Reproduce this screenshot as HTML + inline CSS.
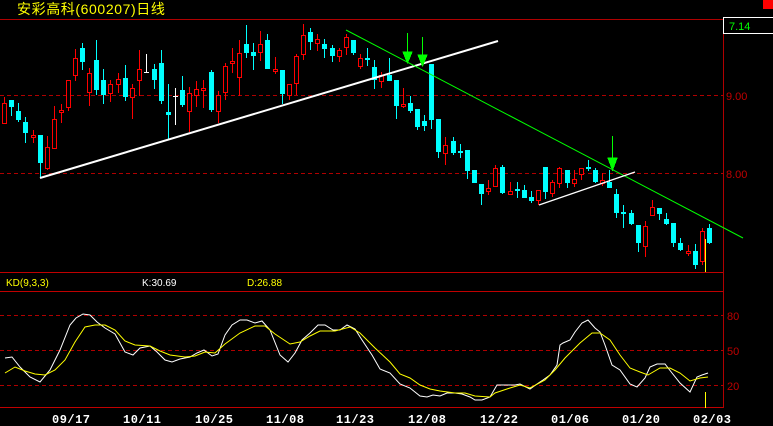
<!DOCTYPE html>
<html><head><meta charset="utf-8"><style>
html,body{margin:0;padding:0;background:#000;width:773px;height:426px;overflow:hidden}
svg{display:block}
text{font-family:"Liberation Sans","Noto Sans CJK SC",sans-serif}
</style></head><body>
<svg id="s" width="773" height="426" xmlns="http://www.w3.org/2000/svg" shape-rendering="crispEdges">
<rect width="773" height="426" fill="#000"/>
<text x="17" y="14" fill="#ffff00" font-size="14" letter-spacing="0.6">安彩高科(600207)日线</text>
<rect x="763" y="0" width="10" height="9" fill="#ff0000"/>
<line x1="0" y1="19.5" x2="773" y2="19.5" stroke="#b00000"/>
<line x1="723.5" y1="19" x2="723.5" y2="408" stroke="#b00000"/>
<rect x="723.5" y="17.5" width="50" height="16" fill="#000" stroke="#fff"/>
<text x="729" y="30" fill="#00ff00" font-size="11">7.14</text>
<g stroke="#b00000" stroke-dasharray="4,3">
<line x1="0" y1="95.5" x2="723" y2="95.5"/><line x1="0" y1="173.5" x2="723" y2="173.5"/>
<line x1="0" y1="315.5" x2="723" y2="315.5"/><line x1="0" y1="350.5" x2="723" y2="350.5"/><line x1="0" y1="385.5" x2="723" y2="385.5"/>
</g>
<g fill="#c00000" font-size="11">
<text x="726" y="100">9.00</text><text x="726" y="178">8.00</text>
<text x="727" y="320">80</text><text x="727" y="355">50</text><text x="727" y="390">20</text>
</g>
<line x1="0" y1="272.5" x2="723" y2="272.5" stroke="#c00000"/>
<line x1="0" y1="291.5" x2="723" y2="291.5" stroke="#c00000"/>
<line x1="0" y1="407.5" x2="723" y2="407.5" stroke="#c00000"/>
<text x="6" y="286" fill="#ffff00" font-size="10">KD(9,3,3)</text>
<text x="142" y="286" fill="#fff" font-size="10">K:30.69</text>
<text x="247" y="286" fill="#ffff00" font-size="10">D:26.88</text>
<g id="c"></g>
<g shape-rendering="auto">
<line x1="40" y1="178" x2="498" y2="41" stroke="#fff" stroke-width="2"/>
<line x1="346" y1="30" x2="743" y2="238" stroke="#00ff00" stroke-width="1"/>
<line x1="539" y1="205" x2="635" y2="172" stroke="#fff" stroke-width="1.2"/>
</g>
<g fill="#00ff00" stroke="#00ff00">
<line x1="407.5" y1="33" x2="407.5" y2="55"/><polygon points="403,52 412,52 407.5,63"/>
<line x1="422.5" y1="37" x2="422.5" y2="58"/><polygon points="418,55 427,55 422.5,66"/>
<line x1="612.5" y1="136" x2="612.5" y2="160"/><polygon points="608,158 617,158 612.5,170"/>
</g>
<line x1="705.5" y1="239" x2="705.5" y2="272" stroke="#ffff00"/>
<line x1="705.5" y1="392" x2="705.5" y2="408" stroke="#ffff00"/>
<g shape-rendering="auto" fill="none">
<polyline stroke="#fff" points="5,358 12,357 20,367 30,377 40,382 50,370 60,350 70,325 76,318 83,314 90,315 97,322 105,328 115,334 125,352 133,355 140,348 150,346 157,352 165,360 172,362 180,359 190,357 197,353 204,350 212,356 218,354 225,335 232,325 240,320 247,320 255,323 262,321 270,330 280,355 288,362 295,353 302,340 310,333 318,325 325,325 333,330 340,330 347,325 355,329 362,340 372,355 380,369 390,373 400,384 410,388 420,396 427,397 433,395 440,396 447,393 455,393 462,394 470,397 475,400 482,400 490,397 497,385 505,385 515,385 520,384 530,389 537,384 543,380 550,375 557,365 560,345 563,343 570,340 575,332 582,323 588,320 595,328 600,332 605,345 612,365 620,370 630,384 637,387 645,378 650,367 657,364 665,364 672,373 680,383 690,392 697,377 702,375 708,373"/>
<polyline stroke="#ffff00" points="5,373 15,367 25,371 35,374 45,375 55,370 65,360 75,342 85,327 95,325 105,325 115,330 125,341 135,345 150,346 160,351 170,355 185,357 195,356 205,352 215,353 225,344 240,333 255,326 265,326 275,334 290,344 300,342 310,336 320,331 335,331 350,327 360,333 375,348 390,362 400,374 410,378 420,385 430,389 440,391 455,393 465,393 475,396 490,397 495,393 510,388 520,385 530,388 545,380 555,370 565,358 580,343 592,333 600,333 610,340 620,355 630,368 640,372 648,375 660,368 670,368 680,373 690,381 700,378 708,377"/>
</g>
<g fill="#fff" font-size="12" font-weight="bold">
<text x="52" y="423" style="font-family:'Liberation Mono',monospace;letter-spacing:0.5px">09/17</text>
<text x="123" y="423" style="font-family:'Liberation Mono',monospace;letter-spacing:0.5px">10/11</text>
<text x="195" y="423" style="font-family:'Liberation Mono',monospace;letter-spacing:0.5px">10/25</text>
<text x="266" y="423" style="font-family:'Liberation Mono',monospace;letter-spacing:0.5px">11/08</text>
<text x="336" y="423" style="font-family:'Liberation Mono',monospace;letter-spacing:0.5px">11/23</text>
<text x="408" y="423" style="font-family:'Liberation Mono',monospace;letter-spacing:0.5px">12/08</text>
<text x="480" y="423" style="font-family:'Liberation Mono',monospace;letter-spacing:0.5px">12/22</text>
<text x="551" y="423" style="font-family:'Liberation Mono',monospace;letter-spacing:0.5px">01/06</text>
<text x="622" y="423" style="font-family:'Liberation Mono',monospace;letter-spacing:0.5px">01/20</text>
<text x="693" y="423" style="font-family:'Liberation Mono',monospace;letter-spacing:0.5px">02/03</text>
</g>
</svg>
<script>
var d=[
[4,'r',103,123,97,123],[11,'c',100,107,100,116],[18,'c',111,120,103,122],[25,'c',122,133,117,143],[33,'r',135,137,130,143],
[40,'c',135,163,135,178],[47,'r',147,168,136,170],[54,'r',119,148,106,148],[61,'r',110,112,104,123],[68,'r',80,107,80,111],
[75,'r',58,75,49,81],[82,'c',48,62,43,70],[89,'r',73,92,68,106],[96,'c',60,90,40,95],[103,'c',80,95,69,104],[110,'r',84,93,80,102],
[118,'r',79,84,73,93],[125,'c',78,97,65,101],[132,'r',88,97,84,119],[139,'r',69,80,50,96],[146,'w',72,72,54,70],[154,'c',69,80,64,89],
[161,'c',63,101,50,104],[168,'c',112,115,84,140],[175,'w',96,96,88,125],[182,'c',90,105,76,107],[189,'r',93,111,87,132],[196,'r',89,95,81,107],
[203,'r',88,90,80,108],[211,'c',72,110,70,112],[218,'r',95,111,91,123],[225,'r',66,92,63,100],[232,'r',61,63,48,73],[239,'r',53,77,40,96],
[246,'c',44,53,25,58],[253,'c',52,56,43,70],[260,'r',44,52,31,61],[267,'c',40,69,34,69],[275,'r',69,71,57,74],[282,'c',70,94,70,104],
[289,'r',84,95,84,100],[296,'r',56,83,54,95],[303,'r',35,54,24,60],[310,'c',32,42,28,50],[317,'r',39,43,34,51],[324,'c',44,49,39,58],
[332,'c',48,56,45,62],[339,'r',50,56,48,62],[346,'r',37,47,34,55],[353,'c',40,53,40,55],[360,'r',58,66,54,69],[367,'c',58,59,48,66],
[374,'c',67,80,60,89],[381,'r',75,81,72,88],[389,'c',75,81,58,81],[396,'c',80,106,80,119],[403,'r',104,106,88,108],[410,'c',103,111,96,113],
[417,'c',109,127,109,130],[424,'c',121,126,115,131],[431,'c',64,120,64,129],[438,'c',119,152,119,158],[445,'r',145,153,137,165],[453,'c',141,153,137,155],
[460,'c',151,153,144,158],[467,'c',150,171,150,179],[474,'c',170,183,170,183],[481,'c',184,194,184,205],[488,'r',188,191,180,195],[495,'r',168,186,165,186],
[502,'c',167,193,165,194],[510,'r',191,194,182,195],[517,'c',189,191,182,198],[524,'c',190,198,185,198],[531,'c',197,201,191,203],[538,'r',190,200,190,205],
[545,'c',167,192,167,199],[552,'r',182,193,180,197],[559,'r',168,183,167,188],[567,'c',170,183,170,188],[574,'r',179,183,170,187],[581,'r',168,174,168,180],
[588,'c',167,168,160,171],[595,'c',170,182,168,183],[602,'r',180,183,173,186],[609,'c',182,188,170,188],[616,'c',194,213,189,218],[623,'c',212,213,205,228],
[631,'c',213,224,210,225],[638,'c',225,243,225,252],[645,'r',226,246,221,257],[652,'r',207,215,200,215],[659,'c',208,214,208,220],[666,'c',219,224,213,225],
[673,'c',223,243,223,247],[680,'c',243,250,238,251],[688,'r',251,253,245,256],[695,'c',251,265,244,269],[702,'r',231,261,228,265],[709,'c',228,243,224,244]];
var s='';
d.forEach(function(a){var x=a[0],t=a[1],o=a[2],c=a[3],h=a[4],l=a[5];
var col=t=='r'?'#ff0000':(t=='c'?'#00ffff':'#ffffff');
if(t=='r'){s+='<line x1="'+(x+.5)+'" y1="'+h+'" x2="'+(x+.5)+'" y2="'+o+'" stroke="'+col+'"/><line x1="'+(x+.5)+'" y1="'+c+'" x2="'+(x+.5)+'" y2="'+l+'" stroke="'+col+'"/>';
s+='<rect x="'+(x-2+.5)+'" y="'+(o+.5)+'" width="4" height="'+Math.max(1,c-o)+'" fill="#000" stroke="'+col+'"/>';}
else{s+='<line x1="'+(x+.5)+'" y1="'+Math.min(h,o)+'" x2="'+(x+.5)+'" y2="'+Math.max(l,c)+'" stroke="'+col+'"/>';
if(t=='w')s+='<rect x="'+(x-2)+'" y="'+o+'" width="5" height="1" fill="'+col+'"/>';
else s+='<rect x="'+(x-2)+'" y="'+o+'" width="5" height="'+Math.max(2,c-o)+'" fill="'+col+'"/>';}
});
document.getElementById('c').innerHTML=s;
</script>
</body></html>
